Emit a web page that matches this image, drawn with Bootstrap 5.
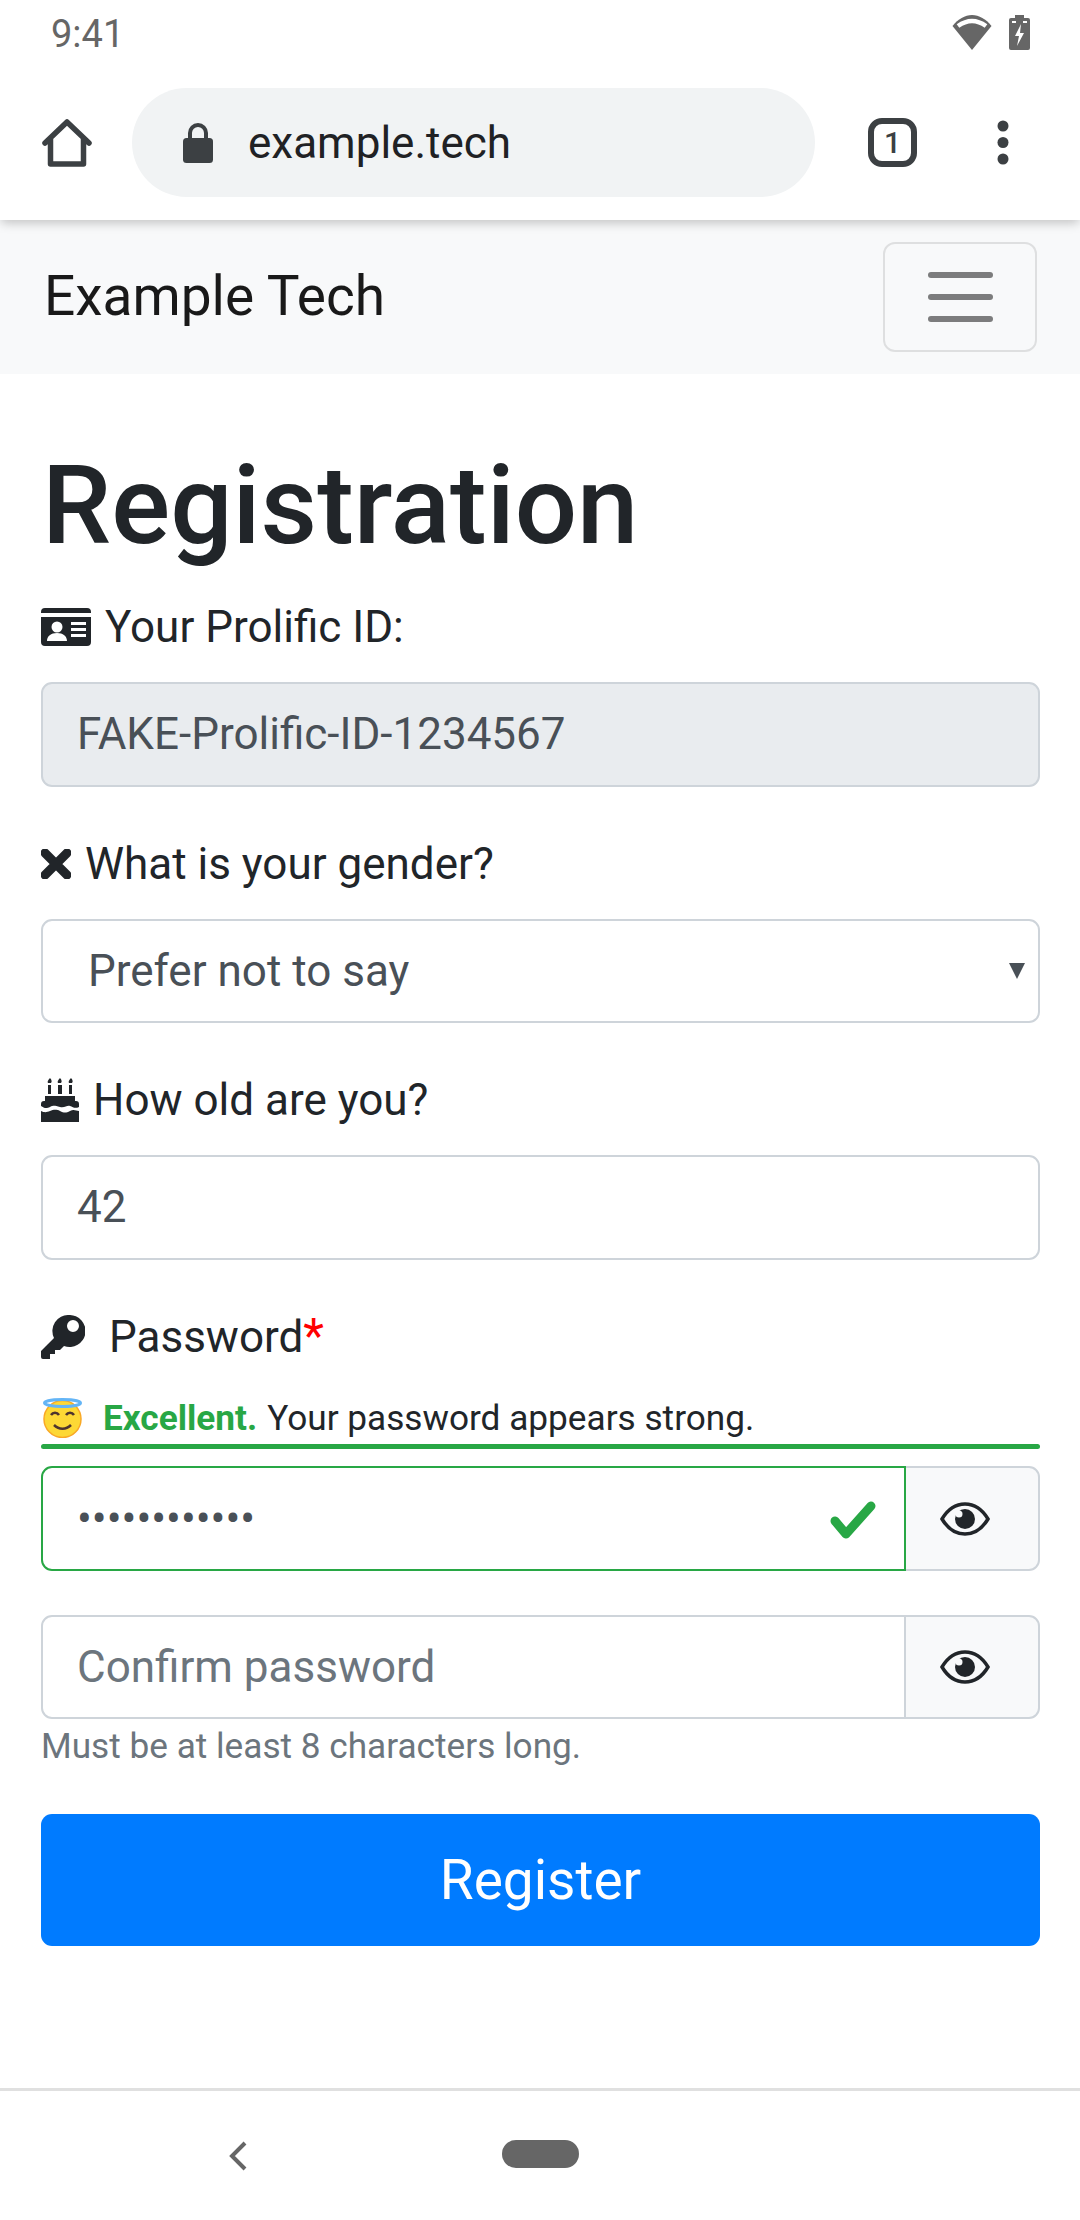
<!DOCTYPE html>
<html lang="en">
<head>
<meta charset="UTF-8">
<title>Registration</title>
<link href="https://cdn.jsdelivr.net/npm/bootstrap@5.3.0/dist/css/bootstrap.min.css" rel="stylesheet">
<style>
html, body { height: 100%; }
body { font-family: Roboto, "Liberation Sans", sans-serif; font-size: 44px; color: #212529; line-height: 1.5; }
.phone { height: 2220px; display: flex; flex-direction: column; overflow: hidden; }

/* android + chrome */
.status-bar { height: 62px; padding: 6px 50px 0 51px; color: #666; font-size: 38px; position: relative; z-index: 3; background: #fff; }
.status-bar svg { display: block; }
.status-icons { gap: 17px; margin-top: -3px; }
.chrome-bar { height: 158px; padding: 3px 0 0 42px; box-shadow: 0 4px 10px -1px rgba(0,0,0,.22); position: relative; z-index: 2; background: #fff; }
.url-pill { margin-left: 40px; width: 683px; height: 109px; border-radius: 55px; background: #f1f3f4; padding-left: 51px; font-size: 44px; color: #202124; }
.url-pill svg { margin-right: 35px; }
.tab-count { margin-left: 53px; width: 49px; height: 49px; border: 6px solid #3c4043; border-radius: 14px; font-size: 30px; font-weight: 500; color: #3c4043; line-height: 1; }
.dots { margin-left: 80px; }

/* site navbar */
.site-nav { height: 154px; padding: 0 43px 0 44px; background: #f8f9fa; }
.site-brand { font-size: 55px; color: rgba(0,0,0,.9); margin-top: -2px; }
.nav-burger { width: 154px; height: 110px; border: 2px solid rgba(0,0,0,.1); border-radius: 12px; gap: 16px; }
.nav-burger i { display: block; width: 65px; height: 6px; border-radius: 3px; background: rgba(0,0,0,.5); }

/* form */
.reg-main { padding: 0 40px 0 41px; flex: 1; }
.reg-title { font-size: 110px; font-weight: 500; line-height: 1.2; margin: 66px 0 22px 1px; }
.field { margin-bottom: 44px; }
.field-label { display: flex; align-items: center; margin-bottom: 22px; line-height: 66px; height: 66px; }
.field-label svg { flex: none; }
.icon-gap { margin-right: 14px; }
.icon-gap-key { margin-right: 24px; }
.reg-input { display: block; width: 100%; height: 104.5px; font-size: 44px; line-height: 66px; padding: 0 34px; border: 2px solid #ced4da; border-radius: 11px; color: #495057; background: #fff; }
.reg-input::placeholder { color: #6c757d; opacity: 1; }
.reg-input[readonly] { background: #e9ecef; }
.select-box { display: flex; align-items: center; justify-content: space-between; height: 104.5px; padding: 0 13px 0 45px; border: 2px solid #ced4da; border-radius: 11px; color: #495057; }
.req-star { color: #f00; font-size: 48px; line-height: 1; }
.strength { font-size: 35.2px; line-height: 52.8px; margin-top: 22px; display: flex; align-items: center; padding-left: 2px; }
.strength b { color: #28a745; font-weight: 700; margin: 0 10px 0 20px; }
.strength-bar { height: 5px; background: #28a745; border-radius: 3px; margin-bottom: 17px; }
.pw-row { display: flex; height: 104.5px; }
.pw-row .reg-input { flex: 1; min-width: 0; height: 100%; border-radius: 11px 0 0 11px; }
.pw-row .pw-ok { border-color: #28a745; position: relative; z-index: 1; }
.pw-wrap { position: relative; flex: 1; min-width: 0; display: flex; }
.pw-check { position: absolute; right: 30px; top: 35px; z-index: 2; }
.pw-eye { width: 136px; margin-left: -2px; display: flex; align-items: center; justify-content: center; padding-right: 14px; background: #f8f9fa; border: 2px solid #ced4da; border-radius: 0 11px 11px 0; }
.pw-second { margin-top: 44px; }
.hint-text { font-size: 35.2px; color: #6c757d; line-height: 53px; margin-top: 1px; }
.btn-register { display: block; width: 100%; height: 132px; font-size: 55px; color: #fff; background: #007bff; border: 0; border-radius: 11px; margin-top: 41px; }

/* android nav */
.nav-strip { height: 132px; border-top: 3px solid #e0e0e0; position: relative; }
.nav-strip svg { position: absolute; left: 228px; top: 50px; }
.home-pill { position: absolute; left: 502px; top: 49px; width: 77px; height: 28px; border-radius: 14px; background: #666; }
</style>
</head>
<body>
<div class="phone">
    <div class="status-bar d-flex align-items-center justify-content-between">
        <span>9:41</span>
        <span class="status-icons d-flex align-items-center">
            <svg width="40" height="35" viewBox="0 0 40 35"><path fill="#666" d="M20 35 .5 11C6 4 13 0 20 0s14 4 19.500 11z"/><path fill="none" stroke="#fff" stroke-width="4.500" d="M6 11c9-6.500 19-6.500 28 0"/></svg>
            <svg width="21" height="35" viewBox="0 0 21 35"><path fill="#666" d="M6 0h9v3h4a2 2 0 0 1 2 2v28a2 2 0 0 1-2 2H2a2 2 0 0 1-2-2V5a2 2 0 0 1 2-2h4z"/><path fill="#fff" d="M3 6h4v2H3zM14 6h4v2h-4zM12 9 6 21h4l-2 10 7-13h-4z"/></svg>
        </span>
    </div>

    <div class="chrome-bar d-flex align-items-center">
        <svg width="50" height="50" viewBox="0 0 50 50"><path fill="none" stroke="#3c4043" stroke-width="5.500" stroke-linecap="round" stroke-linejoin="round" d="M3 25 25 4l22 21M8.500 20v26h33V20"/></svg>
        <div class="url-pill d-flex align-items-center">
            <svg width="30" height="40" viewBox="0 0 30 40"><rect x="0" y="15" width="30" height="25" rx="3.500" fill="#3c4043"/><path fill="none" stroke="#3c4043" stroke-width="4" d="M7 17V10a8 8 0 0 1 16 0v7"/></svg>
            <span>example.tech</span>
        </div>
        <div class="tab-count d-flex align-items-center justify-content-center">1</div>
        <svg class="dots" width="12" height="45" viewBox="0 0 12 45"><g fill="#3c4043"><circle cx="6" cy="6" r="5.500"/><circle cx="6" cy="22.500" r="5.500"/><circle cx="6" cy="39" r="5.500"/></g></svg>
    </div>

    <nav class="site-nav d-flex align-items-center justify-content-between">
        <span class="site-brand">Example Tech</span>
        <div class="nav-burger d-flex flex-column align-items-center justify-content-center">
            <i></i><i></i><i></i>
        </div>
    </nav>

    <main class="reg-main">
        <h1 class="reg-title">Registration</h1>

        <div class="field">
            <div class="field-label">
                <svg class="icon-gap" width="50" height="38" viewBox="0 0 50 38"><path fill="#212529" d="M4 0h42a4 4 0 0 1 4 4v1H0V4a4 4 0 0 1 4-4zM0 9h50v25a4 4 0 0 1-4 4H4a4 4 0 0 1-4-4z"/><g fill="#fff"><circle cx="16" cy="19" r="5.500"/><path d="M6 33c0-5 4-8 10-8s10 3 10 8zM30 14h15v3H30zM30 20h15v3H30zM30 26h15v3H30z"/></g></svg>
                <span>Your Prolific ID:</span>
            </div>
            <input class="reg-input" type="text" value="FAKE-Prolific-ID-1234567" readonly>
        </div>

        <div class="field">
            <div class="field-label">
                <svg class="icon-gap" width="30" height="30" viewBox="0 0 30 30"><path fill="none" stroke="#212529" stroke-width="9" stroke-linecap="round" d="M4 4 26 26M26 4 4 26"/></svg>
                <span>What is your gender?</span>
            </div>
            <div class="select-box">
                <span>Prefer not to say</span>
                <svg width="16" height="16" viewBox="0 0 16 16"><path fill="#495057" d="M0 0h16L8 16z"/></svg>
            </div>
        </div>

        <div class="field">
            <div class="field-label">
                <svg class="icon-gap" width="38" height="44" viewBox="0 0 38 44"><path fill="#212529" d="M9 0c2 2 2 4 1 5H7C6 4 7 2 9 0zM19 0c2 2 2 4 1 5h-3c-1-1 0-3 2-5zM30 0c2 2 2 4 1 5h-3c-1-1 0-3 2-5zM7 7h3v9H7zM17 7h4v9h-4zM28 7h3v9h-3zM4 18h30v5h1a3 3 0 0 1 3 3v3c-4 2-6 0-9-1s-5 2-10 1-6-2-10 0-6 1-9-1v-2a3 3 0 0 1 3-3h1zM0 33c4 2 6 1 9 0s6-2 10 0 6 2 10 0 6 0 9 0v11H0z"/></svg>
                <span>How old are you?</span>
            </div>
            <input class="reg-input" type="text" value="42">
        </div>

        <div class="field mb-0">
            <div class="field-label mb-0">
                <svg class="icon-gap-key" width="44" height="44" viewBox="0 0 44 44"><path fill="#212529" fill-rule="evenodd" d="M28 0a16 16 0 1 1-5 31l-4 4h-5v4H9v5H2a2 2 0 0 1-2-2v-6L13 23A16 16 0 0 1 28 0zm4 5a6 6 0 1 0 0 12 6 6 0 0 0 0-12z"/></svg>
                <span>Password<span class="req-star">*</span></span>
            </div>
            <div class="strength">
                <svg width="40" height="40" viewBox="0 0 40 40"><circle cx="19.500" cy="21" r="18.500" fill="#fdd835" stroke="#f9a825" stroke-width="1.500"/><ellipse cx="19.500" cy="5" rx="18" ry="3.500" fill="none" stroke="#64b5f6" stroke-width="3"/><path d="M8 17c2-3 6-3 8 0M23 17c2-3 6-3 8 0" fill="none" stroke="#4e342e" stroke-width="2.500"/><path d="M11 27c5 5 12 5 17 0" fill="none" stroke="#4e342e" stroke-width="2.500"/></svg>
                <b>Excellent.</b><span>Your password appears strong.</span>
            </div>
            <div class="strength-bar"></div>
            <div class="pw-row">
                <div class="pw-wrap">
                    <input class="reg-input pw-ok" type="password" value="************">
                    <svg class="pw-check" width="46" height="38" viewBox="0 0 46 38"><path fill="none" stroke="#28a745" stroke-width="9" stroke-linecap="round" stroke-linejoin="round" d="M5 20 16 33 41 5"/></svg>
                </div>
                <div class="pw-eye">
                    <svg width="50" height="34" viewBox="0 0 50 34"><path fill="none" stroke="#212529" stroke-width="3.500" d="M2 17C8 7 16 2 25 2s17 5 23 15c-6 10-14 15-23 15S8 27 2 17z"/><circle cx="25" cy="17" r="10" fill="#212529"/><circle cx="19" cy="12" r="3.500" fill="#f8f9fa"/></svg>
                </div>
            </div>
        </div>

        <div class="pw-row pw-second">
            <input class="reg-input" type="password" placeholder="Confirm password">
            <div class="pw-eye">
                <svg width="50" height="34" viewBox="0 0 50 34"><path fill="none" stroke="#212529" stroke-width="3.500" d="M2 17C8 7 16 2 25 2s17 5 23 15c-6 10-14 15-23 15S8 27 2 17z"/><circle cx="25" cy="17" r="10" fill="#212529"/><circle cx="19" cy="12" r="3.500" fill="#f8f9fa"/></svg>
            </div>
        </div>
        <div class="hint-text">Must be at least 8 characters long.</div>

        <button class="btn-register" type="button">Register</button>
    </main>

    <div class="nav-strip">
        <svg width="20" height="30" viewBox="0 0 20 30"><path fill="none" stroke="#666" stroke-width="4" d="M17 2 4 15l13 13"/></svg>
        <div class="home-pill"></div>
    </div>
</div>
</body>
</html>
